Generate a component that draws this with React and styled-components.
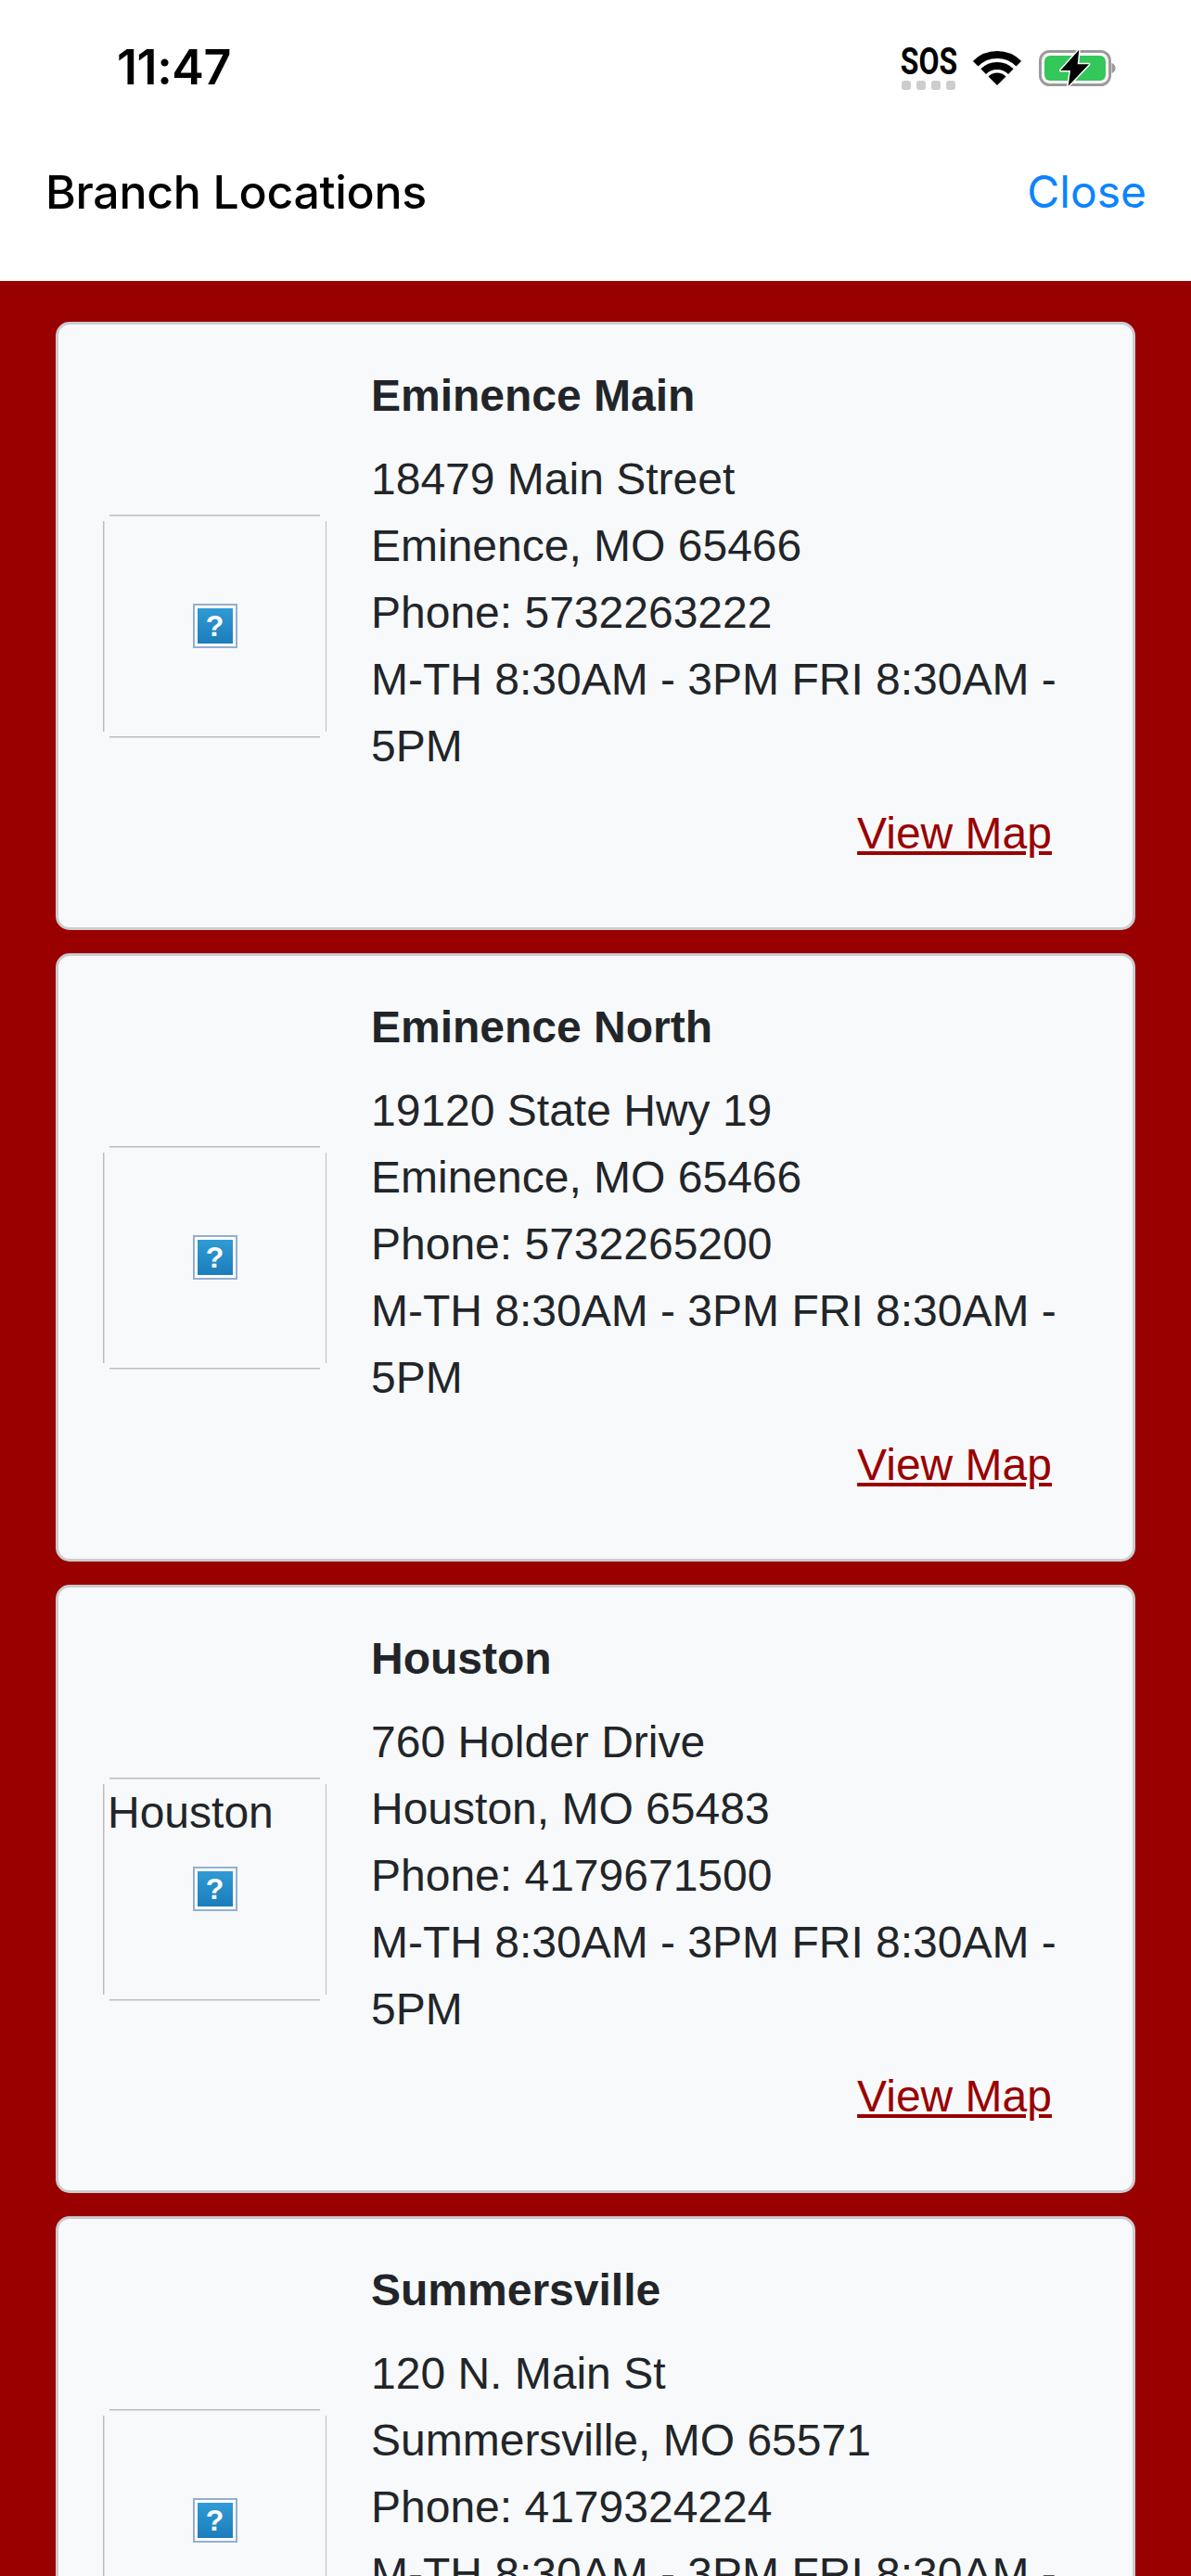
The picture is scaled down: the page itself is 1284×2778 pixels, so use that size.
import React from "react";
import styled, { createGlobalStyle } from "styled-components";

const Global = createGlobalStyle`
  html, body { margin: 0; padding: 0; background: #990000; }
  body { height: 2778px; overflow: hidden; }
  * { box-sizing: border-box; }
`;

const Page = styled.div`
  width: 1284px;
  height: 2778px;
  overflow: hidden;
  background: #990000;
`;

const Top = styled.header`
  height: 303px;
  background: #fff;
  display: flex;
  flex-direction: column;
`;

const StatusBar = styled.div`
  height: 146px;
  display: flex;
  align-items: center;
  justify-content: space-between;
  padding: 0 80px 0 126px;
`;

const Clock = styled.span`
  font: 600 52px/1 Inter, sans-serif;
  color: #000;
  letter-spacing: -0.4px;
`;

const StatusIcons = styled.div`
  display: flex;
  align-items: center;
  gap: 17px;
`;

const Sos = styled.div`
  width: 62px;
  display: flex;
  flex-direction: column;
  align-items: center;
  gap: 5px;
  margin-top: 2px;
`;

const SosLabel = styled.span`
  font: 700 40px/30px Roboto, sans-serif;
  color: #000;
  transform: scaleX(0.8);
`;

const SosDots = styled.div`
  display: flex;
  gap: 6px;
`;

const SosDot = styled.i`
  width: 10px;
  height: 10px;
  border-radius: 3px;
  background: #cdcdcd;
`;

const NavRow = styled.div`
  flex: 1;
  display: flex;
  align-items: center;
  justify-content: space-between;
  padding: 0 48px 35px 49px;
`;

const Title = styled.h1`
  margin: 0;
  font: 500 50px/1.2 Inter, sans-serif;
  color: #000;
  letter-spacing: -0.3px;
`;

const CloseLink = styled.span`
  font: 400 48px/1.2 Inter, sans-serif;
  color: #0a84ff;
`;

const List = styled.main`
  display: flex;
  flex-direction: column;
  gap: 25px;
  padding: 44px 60px 0;
`;

const Card = styled.article`
  height: 656px;
  flex: none;
  display: flex;
  align-items: center;
  gap: 48px;
  padding: 0 0 0 48px;
  background: #f8f9fa;
  border: 3px solid #cbcccf;
  border-radius: 15px;
  font-family: "Liberation Sans", Arial, sans-serif;
  color: #212529;
`;

const Thumb = styled.div`
  position: relative;
  flex: none;
  width: 241px;
  height: 241px;
  display: flex;
  align-items: center;
  justify-content: center;
  background:
    linear-gradient(#bcbcc0, #bcbcc0) center top / calc(100% - 14px) 1.5px no-repeat,
    linear-gradient(#bcbcc0, #bcbcc0) center bottom / calc(100% - 14px) 1.5px no-repeat,
    linear-gradient(#bcbcc0, #bcbcc0) left center / 1.5px calc(100% - 14px) no-repeat,
    linear-gradient(#bcbcc0, #bcbcc0) right center / 1.5px calc(100% - 14px) no-repeat;
`;

const AltText = styled.span`
  position: absolute;
  top: 2px;
  left: 5px;
  font-size: 48px;
  line-height: 72px;
`;

const BrokenIcon = styled.span`
  width: 48px;
  height: 48px;
  display: flex;
  align-items: center;
  justify-content: center;
  border: 2px solid #94aed2;
  background: #fff;
  padding: 3px;
`;

const BrokenGlyph = styled.span`
  width: 100%;
  height: 100%;
  display: flex;
  align-items: center;
  justify-content: center;
  background: linear-gradient(#2f9bd4, #1c7dbb);
  color: #fff;
  font: 700 32px/1 "Liberation Sans", sans-serif;
`;

const Body = styled.div`
  flex: none;
  width: 752px;
  display: flex;
  flex-direction: column;
`;

const Name = styled.h5`
  margin: 0 0 25px;
  font-size: 48px;
  font-weight: 700;
  line-height: 58px;
`;

const Line = styled.div`
  font-size: 48px;
  line-height: 72px;
`;

const MapLink = styled.a`
  align-self: flex-end;
  margin: 22px 18px 18px 0;
  font-size: 48px;
  line-height: 72px;
  color: #990000;
  text-decoration: underline;
`;

const branches = [
  { name: "Eminence Main", street: "18479 Main Street", city: "Eminence, MO 65466", phone: "5732263222" },
  { name: "Eminence North", street: "19120 State Hwy 19", city: "Eminence, MO 65466", phone: "5732265200" },
  { name: "Houston", street: "760 Holder Drive", city: "Houston, MO 65483", phone: "4179671500", alt: "Houston" },
  { name: "Summersville", street: "120 N. Main St", city: "Summersville, MO 65571", phone: "4179324224" },
];

const arc = (r) => {
  const s = r * 0.7071;
  return `M${26 - s} ${38 - s}A${r} ${r} 0 0 1 ${26 + s} ${38 - s}`;
};

const Wifi = () => (
  <svg width="52" height="38" viewBox="0 0 52 38" aria-hidden="true">
    <path d={arc(33)} fill="none" stroke="#000" strokeWidth="8" />
    <path d={arc(21)} fill="none" stroke="#000" strokeWidth="8" />
    <path d="M26 38L16.5 28.5A13.4 13.4 0 0 1 35.5 28.5Z" fill="#000" />
  </svg>
);

const Battery = () => (
  <svg width="86" height="44" viewBox="0 0 86 44" aria-hidden="true">
    <rect x="3.5" y="4.5" width="75" height="36" rx="10" fill="none" stroke="#9b9b9b" strokeWidth="3" />
    <rect x="8" y="9" width="66" height="27" rx="6" fill="#34c759" />
    <path d="M80.5 17C83 17.6 84.5 19.8 84.5 22.5S83 27.4 80.5 28Z" fill="#9b9b9b" />
    <path
      d="M45.3 2.7L25.3 25H36L33.7 41.7L56 18.3H43.7Z"
      fill="#000"
      stroke="#fff"
      strokeWidth="3"
      strokeLinejoin="round"
      paintOrder="stroke"
    />
  </svg>
);

export default function App() {
  return (
    <Page>
      <Global />
      <Top>
        <StatusBar>
          <Clock>11:47</Clock>
          <StatusIcons>
            <Sos>
              <SosLabel>SOS</SosLabel>
              <SosDots>
                <SosDot /><SosDot /><SosDot /><SosDot />
              </SosDots>
            </Sos>
            <Wifi />
            <Battery />
          </StatusIcons>
        </StatusBar>
        <NavRow>
          <Title>Branch Locations</Title>
          <CloseLink>Close</CloseLink>
        </NavRow>
      </Top>
      <List>
        {branches.map((b) => (
          <Card key={b.name}>
            <Thumb>
              {b.alt && <AltText>{b.alt}</AltText>}
              <BrokenIcon><BrokenGlyph>?</BrokenGlyph></BrokenIcon>
            </Thumb>
            <Body>
              <Name>{b.name}</Name>
              <Line>{b.street}</Line>
              <Line>{b.city}</Line>
              <Line>Phone: {b.phone}</Line>
              <Line>M-TH 8:30AM - 3PM FRI 8:30AM - 5PM</Line>
              <MapLink>View Map</MapLink>
            </Body>
          </Card>
        ))}
      </List>
    </Page>
  );
}
